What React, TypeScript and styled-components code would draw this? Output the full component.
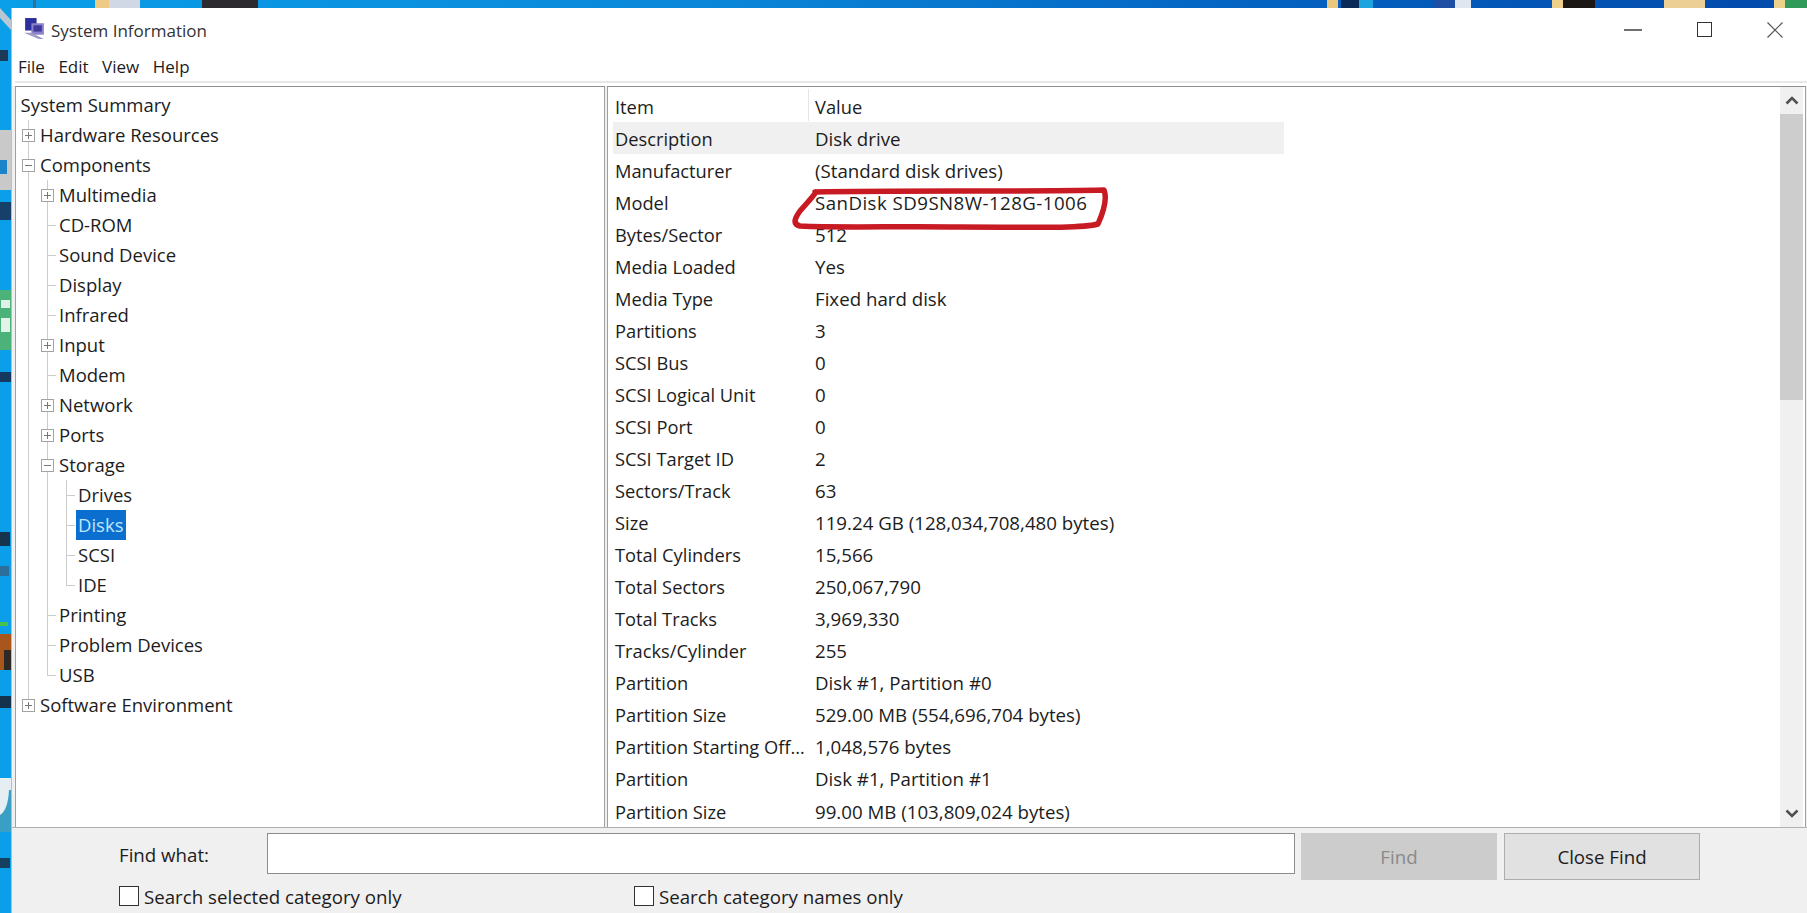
import React from "react";
import styled, { createGlobalStyle } from "styled-components";

const Global = createGlobalStyle`
  html, body { margin: 0; padding: 0; background: #0a9fe6; }
  body { font-family: "Open Sans", "Noto Sans", "Liberation Sans", sans-serif; color: #1c1c1c; }
  * { box-sizing: border-box; }
`;

const Screen = styled.div`
  position: relative;
  width: 1807px;
  height: 913px;
  overflow: hidden;
  padding: 8px 0 0 11px;
`;

const Wallpaper = styled.svg`
  position: absolute;
  inset: 0;
  width: 1807px;
  height: 913px;
`;

const Markup = styled.svg`
  position: absolute;
  inset: 0;
  width: 1807px;
  height: 913px;
  pointer-events: none;
`;

const Window = styled.div`
  position: relative;
  height: 905px;
  background: #fff;
  display: flex;
  flex-direction: column;
  border-left: 1px solid #c9b9a6;
`;

const TitleBar = styled.div`
  height: 45px;
  flex: none;
  display: flex;
  align-items: center;
  padding: 0 24px 0 11px;
`;

const AppIcon = styled.svg`
  width: 23px;
  height: 25px;
  flex: none;
  margin-bottom: 3px;
`;

const Title = styled.span`
  margin-left: 5px;
  font-size: 17px;
  color: #333;
  flex: 1;
`;

const Controls = styled.div`
  display: flex;
  align-items: center;
  gap: 55px;
  margin-bottom: 2px;
`;

const MenuBar = styled.div`
  height: 27px;
  flex: none;
  display: flex;
  align-items: center;
  gap: 13.5px;
  padding-left: 6px;
  font-size: 17px;
`;

const MenuRule = styled.div`
  height: 6px;
  flex: none;
  margin-left: 3px;
  padding-top: 1px;
  &::before {
    content: "";
    display: block;
    height: 2px;
    background: #e8e8e8;
  }
`;

const Panes = styled.div`
  height: 741px;
  flex: none;
  display: flex;
  gap: 2px;
  padding: 0 1px 0 3px;
  background: #f0f0f0;
`;

const TreePane = styled.div`
  width: 590px;
  flex: none;
  background: #fff;
  border-top: 1px solid #8f8f8f;
  border-left: 1px solid #a0a0a0;
  border-right: 1px solid #a0a0a0;
  padding: 3px 0 0 2.5px;
`;

const TreeRow = styled.div<{ $root?: boolean }>`
  height: 30px;
  display: flex;
  align-items: stretch;
  font-size: 18.5px;
  margin-left: ${(p) => (p.$root ? "-0.5px" : "0")};
`;

const Slot = styled.span<{ $line: "none" | "through" | "tee" | "end"; $stub?: boolean }>`
  position: relative;
  width: 19px;
  flex: none;
  display: flex;
  align-items: center;
  justify-content: center;
  &::before {
    content: "";
    display: ${(p) => (p.$line === "none" ? "none" : "block")};
    position: absolute;
    left: 9px;
    top: 0;
    height: ${(p) => (p.$line === "end" ? "50%" : "100%")};
    border-left: 1px solid #cccccc;
  }
  &::after {
    content: "";
    display: ${(p) => (p.$stub ? "block" : "none")};
    position: absolute;
    left: 9px;
    top: 50%;
    width: 9px;
    border-top: 1px solid #cccccc;
  }
`;

const Expander = styled.svg`
  position: relative;
  z-index: 1;
  width: 13px;
  height: 13px;
`;

const Node = styled.span<{ $selected?: boolean }>`
  align-self: center;
  height: 30px;
  line-height: 29px;
  padding: 0 2.5px;
  background: ${(p) => (p.$selected ? "#0a6fce" : "transparent")};
  color: ${(p) => (p.$selected ? "#bfe6ff" : "#1c1c1c")};
`;

const DetailPane = styled.div`
  flex: 1;
  min-width: 0;
  display: flex;
  background: #fff;
  border-top: 1px solid #8f8f8f;
  border-left: 1px solid #a0a0a0;
  border-right: 1px solid #a0a0a0;
`;

const Listing = styled.div`
  flex: 1;
  min-width: 0;
  overflow: hidden;
  padding-left: 5px;
  font-size: 18.3px;
`;

const ListHeader = styled.div`
  height: 35px;
  width: 671px;
  display: grid;
  grid-template-columns: 195px 476px;
  align-items: center;
`;

const HeaderCell = styled.div`
  height: 32px;
  line-height: 35px;
  padding-left: 2px;
  & + & {
    border-left: 1px solid #e5e5e5;
    padding-left: 6px;
  }
`;

const ListRow = styled.div<{ $alt?: boolean }>`
  height: 32.05px;
  width: 671px;
  display: grid;
  grid-template-columns: 195px 476px;
  align-items: center;
  background: ${(p) => (p.$alt ? "#f0f0f0" : "transparent")};
`;

const Cell = styled.div`
  padding-left: 2px;
  white-space: nowrap;
  overflow: hidden;
  text-overflow: ellipsis;
`;

const ValueCell = styled.div<{ $tracking?: number }>`
  padding-left: 7px;
  white-space: nowrap;
  font-size: 18.7px;
  letter-spacing: ${(p) => p.$tracking ?? 0}px;
`;

const Scrollbar = styled.div`
  width: 23px;
  flex: none;
  margin-right: 2px;
  display: flex;
  flex-direction: column;
  background: #f0f0f0;
`;

const ScrollButton = styled.div`
  height: 27px;
  flex: none;
  display: flex;
  align-items: center;
  justify-content: center;
`;

const Thumb = styled.div`
  height: 286px;
  flex: none;
  background: #cdcdcd;
`;

const Track = styled.div`
  flex: 1;
`;

const FindBar = styled.div`
  flex: 1;
  background: #f0f0f0;
  border-top: 1px solid #b0b0b0;
  padding: 5px 0 0 107px;
  font-size: 18.7px;
`;

const FindRow = styled.div`
  display: flex;
  align-items: flex-start;
  height: 48px;
`;

const FindLabel = styled.label`
  width: 148px;
  line-height: 44px;
`;

const FindInput = styled.div`
  width: 1028px;
  height: 41px;
  background: #fff;
  border: 1px solid #8c8c8c;
`;

const Button = styled.div<{ $disabled?: boolean }>`
  width: 196px;
  height: 47px;
  margin-left: 6px;
  display: flex;
  align-items: center;
  justify-content: center;
  background: ${(p) => (p.$disabled ? "#cccccc" : "#e1e1e1")};
  color: ${(p) => (p.$disabled ? "#8a8a8a" : "#1c1c1c")};
  border: 1px solid ${(p) => (p.$disabled ? "#cccccc" : "#adadad")};
  & + & {
    margin-left: 7px;
  }
`;

const OptionRow = styled.div`
  display: flex;
  margin-top: 5px;
`;

const Option = styled.div<{ $wide?: boolean }>`
  display: flex;
  align-items: center;
  gap: 5px;
  width: ${(p) => (p.$wide ? "515px" : "auto")};
  height: 20px;
`;

const Check = styled.span`
  width: 20px;
  height: 20px;
  flex: none;
  background: #fff;
  border: 1px solid #333;
`;

type Line = "none" | "through" | "tee" | "end";
type TreeItem = { label: string; level: number; box?: "plus" | "minus"; last?: boolean; selected?: boolean };

const tree: TreeItem[] = [
  { label: "System Summary", level: 0 },
  { label: "Hardware Resources", level: 1, box: "plus" },
  { label: "Components", level: 1, box: "minus" },
  { label: "Multimedia", level: 2, box: "plus" },
  { label: "CD-ROM", level: 2 },
  { label: "Sound Device", level: 2 },
  { label: "Display", level: 2 },
  { label: "Infrared", level: 2 },
  { label: "Input", level: 2, box: "plus" },
  { label: "Modem", level: 2 },
  { label: "Network", level: 2, box: "plus" },
  { label: "Ports", level: 2, box: "plus" },
  { label: "Storage", level: 2, box: "minus" },
  { label: "Drives", level: 3 },
  { label: "Disks", level: 3, selected: true },
  { label: "SCSI", level: 3 },
  { label: "IDE", level: 3, last: true },
  { label: "Printing", level: 2 },
  { label: "Problem Devices", level: 2 },
  { label: "USB", level: 2, last: true },
  { label: "Software Environment", level: 1, box: "plus", last: true },
];

const rows: [string, string, number?][] = [
  ["Description", "Disk drive"],
  ["Manufacturer", "(Standard disk drives)"],
  ["Model", "SanDisk SD9SN8W-128G-1006", 0.45],
  ["Bytes/Sector", "512"],
  ["Media Loaded", "Yes"],
  ["Media Type", "Fixed hard disk"],
  ["Partitions", "3"],
  ["SCSI Bus", "0"],
  ["SCSI Logical Unit", "0"],
  ["SCSI Port", "0"],
  ["SCSI Target ID", "2"],
  ["Sectors/Track", "63"],
  ["Size", "119.24 GB (128,034,708,480 bytes)"],
  ["Total Cylinders", "15,566"],
  ["Total Sectors", "250,067,790"],
  ["Total Tracks", "3,969,330"],
  ["Tracks/Cylinder", "255"],
  ["Partition", "Disk #1, Partition #0"],
  ["Partition Size", "529.00 MB (554,696,704 bytes)"],
  ["Partition Starting Offset", "1,048,576 bytes"],
  ["Partition", "Disk #1, Partition #1"],
  ["Partition Size", "99.00 MB (103,809,024 bytes)"],
];

const BoxIcon = ({ kind }: { kind: "plus" | "minus" }) => (
  <Expander viewBox="0 0 13 13">
    <rect x="0.5" y="0.5" width="12" height="12" fill="#fff" stroke="#a3a3a3" />
    <path d="M3 6.5h7" stroke="#777" />
    {kind === "plus" && <path d="M6.5 3v7" stroke="#777" />}
  </Expander>
);

const Tree = () => (
  <TreePane>
    {tree.map((item) => {
      const slots: React.ReactNode[] = [];
      for (let l = 1; l < item.level; l++) {
        slots.push(<Slot key={l} $line="through" />);
      }
      if (item.level > 0) {
        const line: Line = item.last ? "end" : "tee";
        slots.push(
          <Slot key="own" $line={line} $stub={!item.box}>
            {item.box && <BoxIcon kind={item.box} />}
          </Slot>
        );
      }
      return (
        <TreeRow key={item.label} $root={item.level === 0}>
          {slots}
          <Node $selected={item.selected}>{item.label}</Node>
        </TreeRow>
      );
    })}
  </TreePane>
);

const Desktop = () => (
  <Wallpaper viewBox="0 0 1807 913">
    <defs>
      <linearGradient id="sky" x1="0" x2="1" y1="0" y2="0">
        <stop offset="0" stopColor="#0a9fe8" />
        <stop offset="0.4" stopColor="#0a86d8" />
        <stop offset="0.72" stopColor="#0460bf" />
        <stop offset="1" stopColor="#0349aa" />
      </linearGradient>
    </defs>
    <rect width="1807" height="8" fill="url(#sky)" />
    <rect width="11" height="913" fill="#0a9fe8" />
    <rect x="33" width="3" height="8" fill="#3c6d96" />
    <rect x="95" width="14" height="8" fill="#eecb85" />
    <rect x="109" width="31" height="8" fill="#cfd8e4" />
    <rect x="202" width="56" height="8" fill="#2c2a2e" />
    <rect x="1327" width="11" height="8" fill="#e9c77f" />
    <rect x="1341" width="18" height="8" fill="#0b2a58" />
    <rect x="1359" width="14" height="8" fill="#1aa5e0" />
    <rect x="1433" width="22" height="8" fill="#1e4fa4" />
    <rect x="1455" width="16" height="8" fill="#dfe6f0" />
    <rect x="1552" width="11" height="8" fill="#ecd08c" />
    <rect x="1563" width="32" height="8" fill="#1a1714" />
    <rect x="1664" width="41" height="8" fill="#eccf95" />
    <rect x="1774" width="11" height="8" fill="#ecd08c" />
    <rect x="1785" width="22" height="8" fill="#2f9a5a" />
    <path d="M0 8 L11 20 V30 L0 18 Z" fill="#b9c7d2" />
    <rect y="50" width="8" height="11" fill="#1c3a58" />
    <rect y="130" width="11" height="60" fill="#c9c9c9" />
    <rect y="160" width="7" height="14" fill="#1b83c8" />
    <rect y="202" width="11" height="18" fill="#16406a" />
    <rect y="290" width="11" height="60" fill="#4bb27a" />
    <rect x="1" y="300" width="9" height="8" fill="#dff2e6" />
    <rect x="1" y="318" width="9" height="14" fill="#e2f3e8" />
    <rect y="372" width="11" height="10" fill="#15385e" />
    <rect y="532" width="10" height="14" fill="#17344f" />
    <rect y="566" width="9" height="10" fill="#2c6f9c" />
    <rect y="622" width="8" height="4" fill="#49c04a" />
    <rect y="634" width="11" height="36" fill="#a8561c" />
    <rect x="4" y="650" width="7" height="20" fill="#2d2a25" />
    <rect y="696" width="11" height="12" fill="#14324d" />
    <rect y="778" width="11" height="54" fill="#e5eef2" />
    <path d="M0 815 Q8 810 9 790 L11 790 V832 H0 Z" fill="#3a9fc4" />
    <rect y="858" width="10" height="10" fill="#16405f" />
  </Wallpaper>
);

export default function App() {
  return (
    <Screen>
      <Global />
      <Desktop />
      <Window>
        <TitleBar>
          <AppIcon viewBox="0 0 22 24">
            <rect x="2" y="1" width="11" height="12" fill="#2c2f9e" />
            <rect x="8" y="6" width="12" height="11" fill="#8b80c9" />
            <rect x="10" y="8" width="8" height="6" fill="#3d3a9b" />
            <path d="M1 15 L15 21 H20 L8 15 Z" fill="#9c9cc4" />
          </AppIcon>
          <Title>System Information</Title>
          <Controls>
            <svg width="18" height="4" viewBox="0 0 18 4"><path d="M0 2h18" stroke="#333" strokeWidth="1.4" /></svg>
            <svg width="15" height="15" viewBox="0 0 15 15"><rect x="0.5" y="0.5" width="14" height="14" fill="none" stroke="#333" /></svg>
            <svg width="16" height="16" viewBox="0 0 16 16"><path d="M0.5 0.5l15 15M15.5 0.5l-15 15" stroke="#555" strokeWidth="1.2" /></svg>
          </Controls>
        </TitleBar>
        <MenuBar>
          <span>File</span>
          <span>Edit</span>
          <span>View</span>
          <span>Help</span>
        </MenuBar>
        <MenuRule />
        <Panes>
          <Tree />
          <DetailPane>
            <Listing>
              <ListHeader>
                <HeaderCell>Item</HeaderCell>
                <HeaderCell>Value</HeaderCell>
              </ListHeader>
              {rows.map(([k, v, tracking], i) => (
                <ListRow key={i} $alt={i === 0}>
                  <Cell>{k}</Cell>
                  <ValueCell $tracking={tracking}>{v}</ValueCell>
                </ListRow>
              ))}
            </Listing>
            <Scrollbar>
              <ScrollButton>
                <svg width="14" height="9" viewBox="0 0 14 9"><path d="M1.5 7.5L7 2l5.5 5.5" fill="none" stroke="#505050" strokeWidth="2.6" /></svg>
              </ScrollButton>
              <Thumb />
              <Track />
              <ScrollButton>
                <svg width="14" height="9" viewBox="0 0 14 9"><path d="M1.5 1.5L7 7l5.5-5.5" fill="none" stroke="#505050" strokeWidth="2.6" /></svg>
              </ScrollButton>
            </Scrollbar>
          </DetailPane>
        </Panes>
        <FindBar>
          <FindRow>
            <FindLabel>Find what:</FindLabel>
            <FindInput />
            <Button $disabled>Find</Button>
            <Button>Close Find</Button>
          </FindRow>
          <OptionRow>
            <Option $wide>
              <Check />
              <span>Search selected category only</span>
            </Option>
            <Option>
              <Check />
              <span>Search category names only</span>
            </Option>
          </OptionRow>
        </FindBar>
      </Window>
      <Markup viewBox="0 0 1807 913">
        <path
          d="M815 192 C900 190 1020 192 1104 190 C1108 200 1102 215 1098 224 C1080 229 1020 227 960 227 C900 226 840 228 800 226 C792 224 795 218 800 211 C806 204 812 198 816 192"
          fill="none"
          stroke="#c81a23"
          strokeWidth="5.5"
          strokeLinejoin="round"
          strokeLinecap="round"
        />
      </Markup>
    </Screen>
  );
}
